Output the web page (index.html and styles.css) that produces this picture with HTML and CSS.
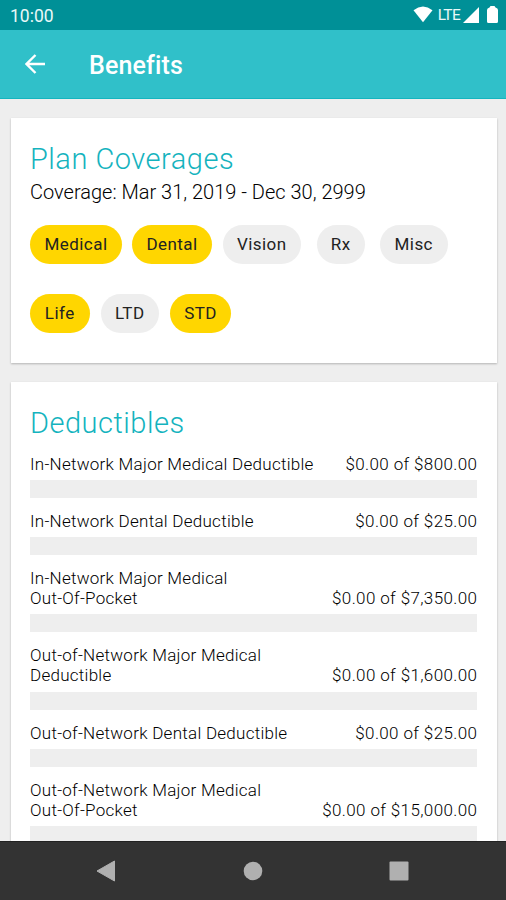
FILE: index.html
```html
<!DOCTYPE html>
<html lang="en">
<head>
<meta charset="utf-8">
<title>Benefits</title>
<link rel="stylesheet" href="styles.css">
</head>
<body>
<div class="status">
  <span class="clock">10:00</span>
  <svg class="wifi" width="20" height="17" viewBox="0 0 20 17"><path d="M.5 4.2Q10-3.2 19.500 4.200L10 16.200Z" fill="#fff"/></svg>
  <span class="lte">LTE</span>
  <svg class="signal" width="16" height="16" viewBox="0 0 16 16"><path d="M0 16L16 0V16Z" fill="#fff"/></svg>
  <svg class="battery" width="11" height="17" viewBox="0 0 11 17"><path d="M3.500 0H7.500L8.500 1.500Q11 2 11 4V15.500Q11 17 9.500 17H1.500Q0 17 0 15.500V4Q0 2 2.500 1.500Z" fill="#fff"/></svg>
</div>
<header class="appbar">
  <svg class="back" width="20" height="20" viewBox="0 0 20 20"><path d="M10.500 1L1.500 10L10.500 19M1.500 10H20" fill="none" stroke="#fff" stroke-width="2.400"/></svg>
  <h1 class="heading">Benefits</h1>
</header>
<main class="content">
  <section class="card plans">
    <h2 class="title">Plan Coverages</h2>
    <p class="period">Coverage: Mar 31, 2019 - Dec 30, 2999</p>
    <div class="chips">
      <span class="chip on medical">Medical</span><span class="chip on dental">Dental</span><span class="chip vision">Vision</span><span class="chip rx">Rx</span><span class="chip misc">Misc</span>
    </div>
    <div class="chips">
      <span class="chip on life">Life</span><span class="chip ltd">LTD</span><span class="chip on std">STD</span>
    </div>
  </section>
  <section class="card deductibles">
    <h2 class="title">Deductibles</h2>
    <div class="item"><div class="row"><span>In-Network Major Medical Deductible</span><span class="amount">$0.00 of $800.00</span></div><div class="bar"></div></div>
    <div class="item"><div class="row"><span>In-Network Dental Deductible</span><span class="amount">$0.00 of $25.00</span></div><div class="bar"></div></div>
    <div class="item"><div class="row"><span>In-Network Major Medical<br>Out-Of-Pocket</span><span class="amount">$0.00 of $7,350.00</span></div><div class="bar"></div></div>
    <div class="item"><div class="row"><span>Out-of-Network Major Medical<br>Deductible</span><span class="amount">$0.00 of $1,600.00</span></div><div class="bar"></div></div>
    <div class="item"><div class="row"><span>Out-of-Network Dental Deductible</span><span class="amount">$0.00 of $25.00</span></div><div class="bar"></div></div>
    <div class="item"><div class="row"><span>Out-of-Network Major Medical<br>Out-Of-Pocket</span><span class="amount">$0.00 of $15,000.00</span></div><div class="bar"></div></div>
  </section>
</main>
<nav class="navbar">
  <svg width="20" height="22" viewBox="0 0 20 22"><path d="M18.500 1V21L1 11Z" fill="#b0b0b0" stroke="#b0b0b0" stroke-linejoin="round"/></svg>
  <svg width="20" height="20" viewBox="0 0 20 20"><circle cx="10" cy="10" r="9.300" fill="#b0b0b0"/></svg>
  <svg width="20" height="20" viewBox="0 0 20 20"><rect x=".5" y=".5" width="19" height="19" rx="1" fill="#b0b0b0"/></svg>
</nav>
</body>
</html>
```
FILE: styles.css
```css
* { box-sizing: border-box; }
body {
  margin: 0;
  height: 900px;
  overflow: hidden;
  display: flex;
  flex-direction: column;
  background: #eee;
  color: #222;
  font-family: Roboto, "Liberation Sans", sans-serif;
}
h1, h2, p { margin: 0; }
.status {
  flex: none;
  height: 30px;
  display: flex;
  align-items: center;
  padding: 0 8px 0 10px;
  background: #009097;
  color: #e8f8f8;
}
.clock { font-size: 17.500px; line-height: 20px; margin: 1px auto 0 0; }
.lte { font-size: 15.500px; line-height: 20px; letter-spacing: -0.700px; margin: 0 3px 0 5px; }
.wifi { margin-top: -1px; }
.signal { margin-top: -1px; }
.battery { margin-left: 8px; margin-top: -1px; }
.appbar {
  flex: none;
  height: 69px;
  display: flex;
  align-items: center;
  padding: 0 25px 0;
  background: #30c0c9;
  border-bottom: 1px solid #14b5bf;
  color: #fff;
}
.heading { margin-left: 44px; font-size: 25px; line-height: 30px; font-weight: 500; letter-spacing: 0.150px; padding-top: 3px; }
.content { flex: 1; min-height: 0; overflow: hidden; padding: 19px 9px 0 10.500px; }
.card { background: #fff; padding: 0 20px 0 19.500px; box-shadow: 0 1px 2px rgba(0, 0, 0, 0.250); }
.plans { height: 245px; padding-top: 24px; margin-bottom: 18.500px; }
.deductibles { height: 500px; padding-top: 24px; }
.title { color: #14b3be; font-size: 29px; line-height: 34px; font-weight: 300; letter-spacing: 0.500px; }
.period { color: #000; font-size: 20px; line-height: 24px; font-weight: 300; margin: 4px 0 21px; white-space: nowrap; }
.chips { display: flex; height: 39px; margin-bottom: 29.500px; }
.chip {
  height: 39px;
  border-radius: 20px;
  background: #eee;
  font-size: 17px;
  line-height: 38px;
  letter-spacing: 0.450px;
  text-align: center;
}
.on { background: #ffd600; }
.medical { width: 92px; margin-right: 10px; }
.dental { width: 80px; margin-right: 10.500px; }
.vision { width: 78.500px; margin-right: 15.500px; }
.rx { width: 48.500px; margin-right: 15px; }
.misc { width: 67.500px; }
.life { width: 59.500px; margin-right: 11px; }
.ltd { width: 58.500px; margin-right: 11px; }
.std { width: 61px; }
.deductibles .title { margin-bottom: 14px; }
.item { margin-bottom: 12.800px; }
.row {
  display: flex;
  justify-content: space-between;
  align-items: flex-end;
  color: #000;
  font-size: 17px;
  font-weight: 300;
  letter-spacing: 0.270px;
  line-height: 20.200px;
  white-space: nowrap;
}
.amount { letter-spacing: 0.370px; margin-right: -0.300px; }
.bar { height: 18.200px; margin-top: 6px; background: #eee; }
.navbar {
  flex: none;
  height: 59px;
  display: flex;
  align-items: center;
  justify-content: space-between;
  padding: 0 97px 0 96px;
  background: #333;
  border-top: 1px solid #222;
}
```
